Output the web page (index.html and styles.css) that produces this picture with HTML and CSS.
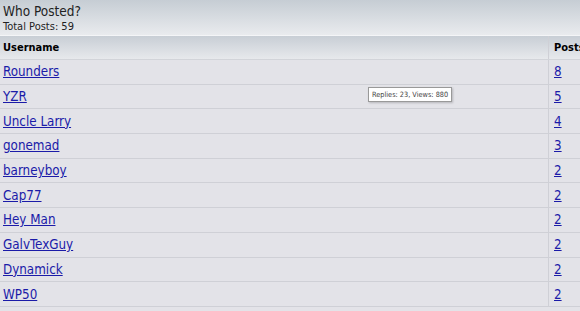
FILE: index.html
```html
<!DOCTYPE html>
<html lang="en">
<head>
    <meta charset="UTF-8">
    <title>Who Posted?</title>
    <link rel="stylesheet" href="styles.css">
</head>
<body>

<div class="page">

    <!-- Title bar -->
    <div class="title-bar">
        <div class="title">Who Posted?</div>
        <div class="subtitle">Total Posts: 59</div>
    </div>

    <!-- Posters table -->
    <table class="posters">
        <thead>
            <tr>
                <th class="col-user">Username</th>
                <th class="col-posts">Posts</th>
            </tr>
        </thead>
        <tbody>
            <tr><td><a href="#">Rounders</a></td><td class="num"><a href="#">8</a></td></tr>
            <tr><td><a href="#">YZR</a></td><td class="num"><a href="#">5</a></td></tr>
            <tr><td><a href="#">Uncle Larry</a></td><td class="num"><a href="#">4</a></td></tr>
            <tr><td><a href="#">gonemad</a></td><td class="num"><a href="#">3</a></td></tr>
            <tr><td><a href="#">barneyboy</a></td><td class="num"><a href="#">2</a></td></tr>
            <tr><td><a href="#">Cap77</a></td><td class="num"><a href="#">2</a></td></tr>
            <tr><td><a href="#">Hey Man</a></td><td class="num"><a href="#">2</a></td></tr>
            <tr><td><a href="#">GalvTexGuy</a></td><td class="num"><a href="#">2</a></td></tr>
            <tr><td><a href="#">Dynamick</a></td><td class="num"><a href="#">2</a></td></tr>
            <tr><td><a href="#">WP50</a></td><td class="num"><a href="#">2</a></td></tr>
        </tbody>
    </table>

    <div class="tooltip">Replies: 23, Views: 880</div>

</div>

</body>
</html>
```

FILE: styles.css
```css
body {
    margin: 0;
    padding: 0;
    font-family: 'DejaVu Sans Condensed', 'DejaVu Sans', sans-serif;
    background: #e3e3e8;
    color: #000;
    overflow: hidden;
}

.page {
    position: relative;
    width: 600px;
}

.title-bar {
    width: 580px;
    height: 36px;
    padding: 3px 3px 0;
    box-sizing: border-box;
    background: linear-gradient(to bottom, #c6cdd4, #e9ebee);
    border-bottom: 1px solid #f4f5f7;
}

.title {
    font-size: 13.5px;
    line-height: 17px;
    color: #222;
}

.subtitle {
    font-size: 11px;
    line-height: 13px;
    color: #222;
}

.posters {
    width: 600px;
    table-layout: fixed;
    border-collapse: collapse;
}

.posters th {
    height: 23px;
    padding: 0 3px;
    text-align: left;
    font-size: 11px;
    font-weight: bold;
    background: linear-gradient(to bottom, #c8ced5, #e7e9ec);
    border-bottom: 1px solid #d2d4d9;
}

.posters .col-user {
    width: 542px;
}

.posters td {
    height: 23.7px;
    padding: 0 3px;
    font-size: 13.3px;
    border-bottom: 1px solid #cfd0d6;
    background: #e3e3e8;
}

.posters .col-posts,
.posters .num {
    padding-left: 5px;
    border-left: 1px solid #cfd0d6;
}

.posters a {
    color: #1b1ba8;
    text-decoration: underline;
}

.tooltip {
    position: absolute;
    left: 368px;
    top: 87px;
    padding: 2px 3px;
    font-size: 7.3px;
    line-height: 9px;
    color: #444;
    background: #fff;
    border: 1px solid #999;
    box-shadow: 1px 1px 2px rgba(0, 0, 0, 0.2);
    white-space: nowrap;
}
```
